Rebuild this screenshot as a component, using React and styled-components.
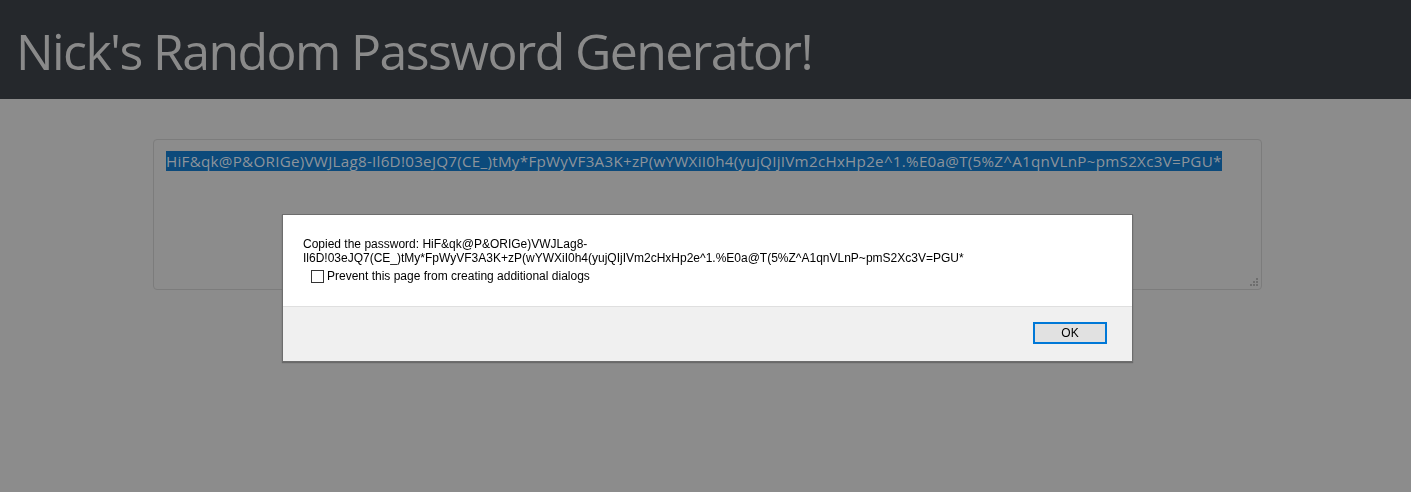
import styled, { createGlobalStyle } from "styled-components";

const password =
  "HiF&qk@P&ORIGe)VWJLag8-Il6D!03eJQ7(CE_)tMy*FpWyVF3A3K+zP(wYWXiI0h4(yujQIjIVm2cHxHp2e^1.%E0a@T(5%Z^A1qnVLnP~pmS2Xc3V=PGU*";

// STYLES
const Global = createGlobalStyle`
  html, body {
    margin: 0;
    padding: 0;
    background: #8c8c8c;
    height: 100%;
  }
  body {
    font-family: "Open Sans", "Noto Sans", sans-serif;
  }
`;

const Header = styled.header`
  background: #25282c;
  height: 99px;
  display: flex;
  align-items: center;
  padding-left: 16px;
`;

const Title = styled.h1`
  margin: 0;
  font-weight: 400;
  font-size: 50px;
  letter-spacing: -1.6px;
  color: #8a8a8a;
  line-height: 1;
  transform: translateY(1px);
`;

const Main = styled.main`
  padding: 40px 149px 0 153px;
`;

const PasswordBox = styled.div`
  position: relative;
  height: 151px;
  box-sizing: border-box;
  border: 1px solid #7c7c7c;
  border-radius: 4px;
  background: #8c8c8c;
  padding: 11px 12px;
  font-size: 15.2px;
  line-height: 20px;
  color: #8d949b;
  letter-spacing: 0.27px;
`;

const Selected = styled.span`
  background: #0c4a7b;
`;

const Grip = styled.svg`
  position: absolute;
  right: 3px;
  bottom: 3px;
`;

const Dialog = styled.div`
  position: fixed;
  top: 214px;
  left: 282px;
  width: 851px;
  box-sizing: border-box;
  border: 1px solid #6d6d6d;
  background: #fff;
  font-family: "Liberation Sans", Arial, sans-serif;
  font-size: 12px;
  color: #000;
  box-shadow: 0 1px 1px rgba(0, 0, 0, 0.25);
`;

const DialogBody = styled.div`
  padding: 22px 20px 0 20px;
  height: 91px;
  box-sizing: border-box;
`;

const Message = styled.div`
  line-height: 14px;
  overflow-wrap: anywhere;
`;

const CheckRow = styled.label`
  display: flex;
  align-items: center;
  gap: 3px;
  margin: 4px 0 0 8px;
  line-height: 14px;
`;

const Box = styled.span`
  width: 11px;
  height: 11px;
  border: 1px solid #333;
  background: #fff;
`;

const Footer = styled.div`
  background: #f0f0f0;
  border-top: 1px solid #dfdfdf;
  height: 55px;
  display: flex;
  justify-content: flex-end;
  align-items: flex-start;
  padding: 15px 25px 0 0;
  box-sizing: border-box;
`;

const OkButton = styled.button`
  width: 74px;
  height: 22px;
  border: 2px solid #0078d7;
  background: #e1e1e1;
  font-family: "Liberation Sans", Arial, sans-serif;
  font-size: 12px;
  color: #000;
  padding: 0;
`;
//END STYLES

export default function App() {
  return (
    <>
      <Global />
      <Header>
        <Title>Nick's Random Password Generator!</Title>
      </Header>
      <Main>
        <PasswordBox>
          <Selected>{password}</Selected>
          <Grip width="8" height="8" viewBox="0 0 8 8">
            <g fill="#6e6e6e">
              <rect x="6" y="0" width="2" height="2" />
              <rect x="3" y="3" width="2" height="2" />
              <rect x="6" y="3" width="2" height="2" />
              <rect x="0" y="6" width="2" height="2" />
              <rect x="3" y="6" width="2" height="2" />
              <rect x="6" y="6" width="2" height="2" />
            </g>
          </Grip>
        </PasswordBox>
      </Main>
      <Dialog>
        <DialogBody>
          <Message>Copied the password: {password}</Message>
          <CheckRow>
            <Box />
            Prevent this page from creating additional dialogs
          </CheckRow>
        </DialogBody>
        <Footer>
          <OkButton>OK</OkButton>
        </Footer>
      </Dialog>
    </>
  );
}
